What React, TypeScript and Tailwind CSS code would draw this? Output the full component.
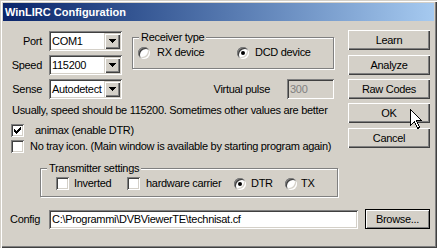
import React from "react";

const sunken =
  "shadow-[inset_1px_1px_0_#808080,inset_-1px_-1px_0_#fff,inset_2px_2px_0_#404040,inset_-2px_-2px_0_#d4d0c8]";
const raised =
  "shadow-[inset_1px_1px_0_#fff,inset_-1px_-1px_0_#404040,inset_-2px_-2px_0_#808080]";
const comboBtn =
  "shadow-[inset_1px_1px_0_#d4d0c8,inset_2px_2px_0_#fff,inset_-1px_-1px_0_#404040,inset_-2px_-2px_0_#808080]";
const etched = "border border-[#808080] shadow-[inset_1px_1px_0_#fff,1px_1px_0_#fff]";

const Arrow = () => (
  <svg width="7" height="4" shapeRendering="crispEdges">
    <path d="M0 0h7v1h-1v1h-1v1h-1v1h-1v-1h-1v-1h-1v-1h-1z" fill="#000" />
  </svg>
);

const Combo = ({ value }: { value: string }) => (
  <div className={`flex h-[20px] w-[73px] bg-white p-[2px] ${sunken}`}>
    <div className="flex-1 overflow-hidden whitespace-nowrap pl-[1px] leading-[16px]">{value}</div>
    <div className={`flex h-[16px] w-[16px] items-center justify-center bg-[#d4d0c8] ${comboBtn}`}>
      <Arrow />
    </div>
  </div>
);

const checkPixels = [
  [6, 0], [5, 1], [6, 1], [0, 2], [4, 2], [5, 2], [6, 2],
  [0, 3], [1, 3], [3, 3], [4, 3], [5, 3], [0, 4], [1, 4], [2, 4], [3, 4], [4, 4],
  [1, 5], [2, 5], [3, 5], [2, 6],
];

const Check = ({ checked }: { checked?: boolean }) => (
  <div className={`flex h-[13px] w-[13px] shrink-0 items-center justify-center bg-white ${sunken}`}>
    {checked && (
      <svg width="7" height="7" shapeRendering="crispEdges">
        {checkPixels.map(([x, y]) => (
          <rect key={`${x}-${y}`} x={x} y={y} width="1" height="1" fill="#000" />
        ))}
      </svg>
    )}
  </div>
);

const Radio = ({ on }: { on?: boolean }) => (
  <div
    className={`flex h-[12px] w-[12px] shrink-0 items-center justify-center rounded-full bg-white ${sunken}`}
  >
    {on && <div className="h-[4px] w-[4px] rounded-full bg-black" />}
  </div>
);

const Btn = ({ children, className = "" }: { children: React.ReactNode; className?: string }) => (
  <div className={`flex h-[20px] w-[82px] items-center justify-center bg-[#d4d0c8] ${raised} ${className}`}>
    {children}
  </div>
);

export default function App() {
  return (
    <div className="relative h-[248px] w-[437px] overflow-hidden whitespace-nowrap bg-[#d4d0c8] p-[3px] font-['Liberation_Sans',Arial,sans-serif] text-[11px] leading-[13px] tracking-[-0.3px] text-black shadow-[inset_1px_1px_0_#d4d0c8,inset_2px_2px_0_#fff,inset_-1px_-1px_0_#404040,inset_-2px_-2px_0_#808080]">
      <div className="flex h-[18px] items-center bg-gradient-to-r from-[#0a246a] to-[#a6caf0] pl-[2px] text-[11px] font-bold tracking-normal text-white">
        WinLIRC Configuration
      </div>

      <div className="flex flex-col pl-[7px] pr-[4px] pt-[9px]">
        <div className="flex">
          <div className="flex w-[328px] flex-col">
            <div className="mt-[1px] flex">
              <div className="grid grid-cols-[32px_73px] items-center gap-x-[7px] gap-y-[4px]">
                <span className="text-right">Port</span>
                <Combo value="COM1" />
                <span className="text-right">Speed</span>
                <Combo value="115200" />
                <span className="text-right">Sense</span>
                <Combo value="Autodetect" />
              </div>

              <div className="ml-[10px] flex w-[202px] flex-col">
                <fieldset className={`h-[38px] ${etched}`}>
                  <legend className="ml-[6px] bg-[#d4d0c8] px-[2px] leading-[13px]">Receiver type</legend>
                  <div className="flex items-center pl-[5px] pt-[2px]">
                    <Radio />
                    <span className="ml-[7px] w-[80px]">RX device</span>
                    <Radio on />
                    <span className="ml-[6px]">DCD device</span>
                  </div>
                </fieldset>
                <div className="mt-[10px] flex items-center justify-end">
                  <span className="mr-[17px]">Virtual pulse</span>
                  <div className={`h-[20px] w-[47px] bg-[#d4d0c8] pl-[3px] leading-[20px] text-[#808080] ${sunken}`}>
                    300
                  </div>
                </div>
              </div>
            </div>

            <div className="mt-[5px] pl-[2px]">
              Usually, speed should be 115200. Sometimes other values are better
            </div>
            <div className="mt-[7px] flex items-center pl-[1px]">
              <Check checked />
              <span className="ml-[11px]">animax (enable DTR)</span>
            </div>
            <div className="mt-[3px] flex items-center pl-[1px]">
              <Check />
              <span className="ml-[6px]">No tray icon. (Main window is available by starting program again)</span>
            </div>

            <fieldset className={`ml-[30px] mt-[9px] h-[35px] w-[298px] ${etched}`}>
              <legend className="ml-[6px] bg-[#d4d0c8] px-[2px] leading-[13px]">Transmitter settings</legend>
              <div className="flex items-center pl-[15px] pt-[2px]">
                <Check />
                <span className="ml-[5px] w-[53px]">Inverted</span>
                <Check />
                <span className="ml-[6px] w-[88px]">hardware carrier</span>
                <Radio on />
                <span className="ml-[5px] w-[34px]">DTR</span>
                <Radio />
                <span className="ml-[4px]">TX</span>
              </div>
            </fieldset>
          </div>

          <div className="ml-auto flex w-[82px] flex-col">
            <Btn>Learn</Btn>
            <Btn className="mt-[5px]">Analyze</Btn>
            <Btn className="mt-[4px]">Raw Codes</Btn>
            <Btn className="mt-[4px]">OK</Btn>
            <Btn className="mt-[5px]">Cancel</Btn>
          </div>
        </div>

        <div className="mt-[12px] flex items-center">
          <span className="w-[39px]">Config</span>
          <div className={`h-[19px] w-[309px] bg-white pl-[3px] leading-[19px] ${sunken}`}>
            C:\Programmi\DVBViewerTE\technisat.cf
          </div>
          <div
            className="ml-auto flex h-[20px] w-[65px] items-center justify-center border border-black bg-[#d4d0c8] shadow-[inset_1px_1px_0_#fff,inset_-1px_-1px_0_#808080]"
          >
            Browse...
          </div>
        </div>
      </div>

      <svg className="absolute left-[410px] top-[109px]" width="13" height="21" shapeRendering="crispEdges">
        <path
          d="M0.5 0.5 V16.5 L4.5 12.5 L7.5 19.5 L9.5 18.5 L6.5 11.5 H11.5 Z"
          fill="#fff"
          stroke="#000"
          strokeWidth="1"
        />
      </svg>
    </div>
  );
}
